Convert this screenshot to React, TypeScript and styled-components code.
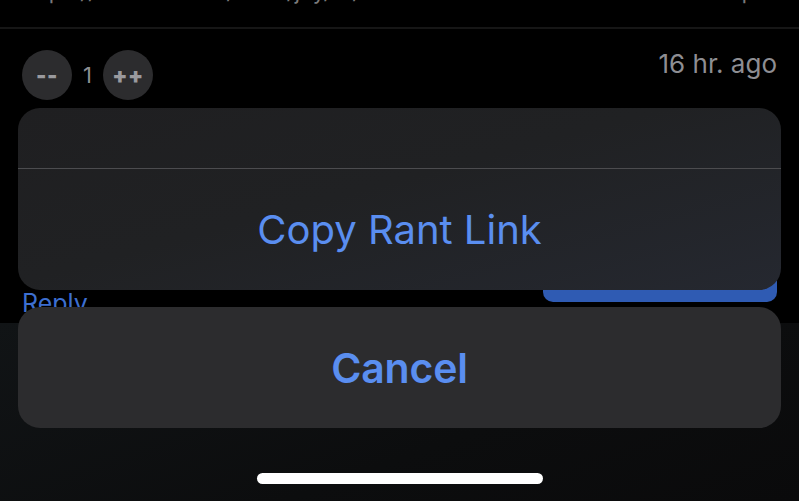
import React from 'react';
import styled, { createGlobalStyle } from 'styled-components';

const GlobalStyle = createGlobalStyle`
  html, body {
    margin: 0;
    padding: 0;
    background: #000;
  }
  body {
    font-family: Inter, "Liberation Sans", sans-serif;
    -webkit-font-smoothing: antialiased;
  }
`;

const Screen = styled.div`
  position: relative;
  width: 799px;
  height: 501px;
  overflow: hidden;
  background: #000;
  display: flex;
  flex-direction: column;
`;

const TopStrip = styled.div`
  height: 27px;
  border-bottom: 2px solid #161616;
  overflow: hidden;
  display: flex;
  justify-content: space-between;
  padding: 0 52px 0 22px;
`;

const CutText = styled.span`
  font-size: 22px;
  line-height: 22px;
  margin-top: -20px;
  color: #7a7a7a;
`;

const MetaRow = styled.div`
  display: flex;
  align-items: flex-start;
  justify-content: space-between;
  padding: 21px 22px 0 22px;
`;

const Votes = styled.div`
  display: flex;
  align-items: center;
  gap: 10px;
`;

const VoteButton = styled.div`
  width: 50px;
  height: 50px;
  border-radius: 50%;
  background: #2c2c2e;
  color: #9a9a9e;
  font-size: 22px;
  font-weight: 900;
  letter-spacing: 0.5px;
  display: flex;
  align-items: center;
  justify-content: center;
`;

const Score = styled.span`
  color: #8e8e93;
  font-size: 22px;
  margin: 0 1px 0 1px;
`;

const TimeAgo = styled.span`
  color: #8e8e93;
  font-size: 26px;
  margin-top: -2px;
`;

const Spacer = styled.div`
  flex: 1;
`;

const ReplyRow = styled.div`
  display: flex;
  align-items: flex-end;
  justify-content: space-between;
  padding: 0 22px 0 22px;
  height: 52px;
`;

const ReplyLink = styled.span`
  color: #3d6fd0;
  font-size: 25px;
  margin-bottom: 5px;
`;

const PostButton = styled.div`
  width: 234px;
  height: 34px;
  border-radius: 10px;
  background: #2f5bb3;
  margin-bottom: 21px;
`;

const BottomArea = styled.div`
  height: 178px;
  background: linear-gradient(160deg, #111416 0%, #0c0d0e 60%, #0a0a0b 100%);
`;

const Sheet = styled.div`
  position: absolute;
  left: 18px;
  right: 18px;
  top: 108px;
  display: flex;
  flex-direction: column;
  gap: 17px;
`;

const Group = styled.div<{ $tint?: boolean }>`
  border-radius: 22px;
  overflow: hidden;
  background: ${p =>
    p.$tint
      ? 'linear-gradient(165deg, #1f1f21 0%, #202123 45%, #252830 100%)'
      : '#2c2c2e'};
  display: flex;
  flex-direction: column;
`;

const TitleSlot = styled.div`
  height: 60px;
  border-bottom: 1px solid #4c4c4f;
`;

const Action = styled.div<{ $bold?: boolean; $h: number }>`
  height: ${p => p.$h}px;
  display: flex;
  align-items: center;
  justify-content: center;
  color: #5a8ef0;
  font-size: ${p => (p.$bold ? 41 : 40)}px;
  font-weight: ${p => (p.$bold ? 600 : 400)};
  letter-spacing: ${p => (p.$bold ? '-0.2px' : '0px')};
`;

const HomeIndicator = styled.div`
  position: absolute;
  left: 257px;
  top: 473px;
  width: 286px;
  height: 11px;
  border-radius: 6px;
  background: #fff;
`;

export default function App() {
  return (
    <>
      <GlobalStyle />
      <Screen>
        <TopStrip>
          <CutText>https://devrant.com/rants/joy/of/code</CutText>
          <CutText>q</CutText>
        </TopStrip>
        <MetaRow>
          <Votes>
            <VoteButton>--</VoteButton>
            <Score>1</Score>
            <VoteButton>++</VoteButton>
          </Votes>
          <TimeAgo>16 hr. ago</TimeAgo>
        </MetaRow>
        <Spacer />
        <ReplyRow>
          <ReplyLink>Reply</ReplyLink>
          <PostButton />
        </ReplyRow>
        <BottomArea />
        <Sheet>
          <Group $tint>
            <TitleSlot />
            <Action $h={121}>Copy Rant Link</Action>
          </Group>
          <Group>
            <Action $bold $h={121}>Cancel</Action>
          </Group>
        </Sheet>
        <HomeIndicator />
      </Screen>
    </>
  );
}
